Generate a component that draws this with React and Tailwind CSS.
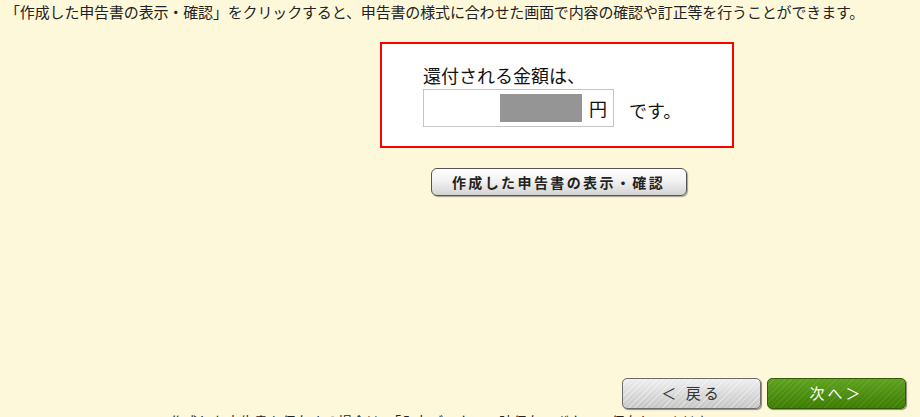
const jp = "font-['Noto_Sans_CJK_JP',sans-serif]";

const NavButton = ({ children, variant }) => {
  const look =
    variant === "next"
      ? "text-white border-[#2f5a06] bg-[repeating-linear-gradient(135deg,rgba(255,255,255,0.08)_0_1px,transparent_1px_4px),linear-gradient(#5fa21f,#3d7d03)]"
      : "text-[#333] border-[#6b6b6b] bg-[repeating-linear-gradient(135deg,rgba(255,255,255,0.35)_0_1px,transparent_1px_4px),linear-gradient(#eeeeee,#c6c6c6)]";
  return (
    <button
      className={`flex items-center justify-center w-[139px] h-[31px] rounded-[5px] border shadow-[1px_1px_1px_rgba(0,0,0,0.45)] text-[15px] tracking-[3px] ${look}`}
    >
      {children}
    </button>
  );
};

export default function App() {
  return (
    <div className={`relative w-[920px] h-[417px] overflow-hidden bg-[#fef8da] text-[#222] ${jp}`}>
      <p className="pl-[5px] pt-[2px] text-[15px] leading-[20px] tracking-[-0.15px]">
        「作成した申告書の表示・確認」をクリックすると、申告書の様式に合わせた画面で内容の確認や訂正等を行うことができます。
      </p>

      <div className="ml-[380px] mt-[20px] w-[354px]">
        <div className="h-[106px] border-2 border-[#ff0000] bg-white pl-[41px] pt-[19px]">
          <div className="text-[18px] leading-[24px] text-[#111]">還付される金額は、</div>
          <div className="flex items-center mt-[2px]">
            <div className="flex items-center justify-end w-[191px] h-[38px] border border-[#c4c4c4] pr-[6px]">
              <div className="w-[82px] h-[28px] bg-[#959595]" />
              <span className="ml-[7px] text-[18px] text-[#111]">円</span>
            </div>
            <span className="ml-[15px] mt-[4px] text-[18px] text-[#111]">です。</span>
          </div>
        </div>

        <div className="flex justify-center mt-[20px] pl-[3px]">
          <button className="w-[256px] h-[28px] rounded-[6px] border border-[#555] bg-[linear-gradient(#ffffff,#f2f2f2_45%,#d4d4d4)] shadow-[1px_1px_1px_rgba(0,0,0,0.35)] text-[14px] font-bold tracking-[2.4px] text-[#222]">
            作成した申告書の表示・確認
          </button>
        </div>
      </div>

      <div className="flex justify-end gap-[6px] mt-[182px] pr-[14px]">
        <NavButton variant="back">＜&nbsp;戻る</NavButton>
        <NavButton variant="next">次へ＞</NavButton>
      </div>

      <p className="pl-[170px] mt-[2px] text-[14px] leading-[20px] text-[#222]">
        作成した申告書を保存する場合は、「入力データの一時保存」ボタンで保存してください。
      </p>
    </div>
  );
}
